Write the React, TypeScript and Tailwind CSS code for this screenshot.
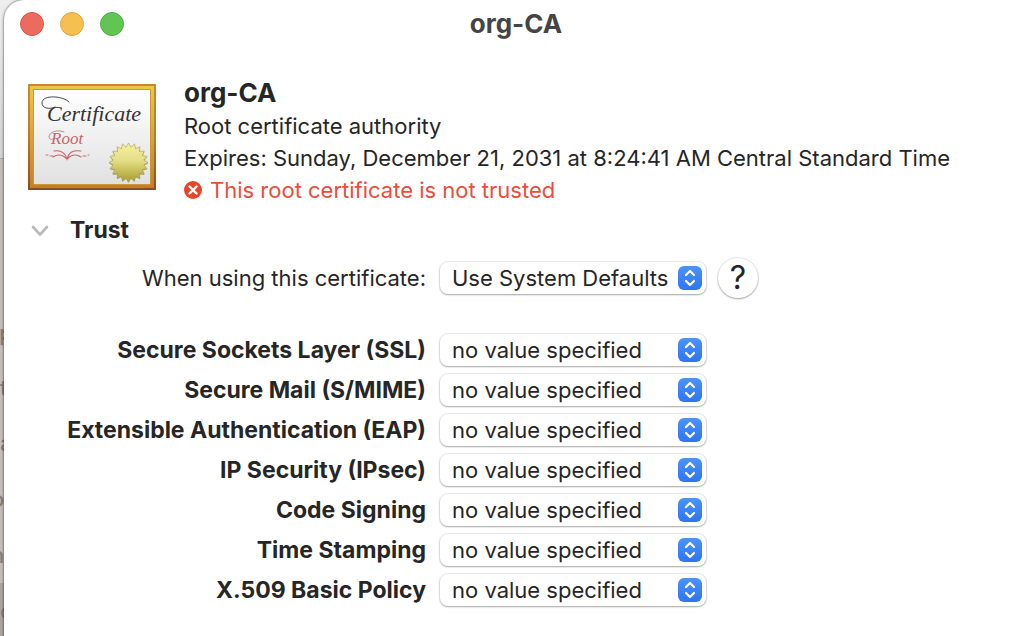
import React from "react";

const policies = [
  { id: "ssl", label: "Secure Sockets Layer (SSL)" },
  { id: "smime", label: "Secure Mail (S/MIME)" },
  { id: "eap", label: "Extensible Authentication (EAP)" },
  { id: "ipsec", label: "IP Security (IPsec)" },
  { id: "codesign", label: "Code Signing" },
  { id: "timestamp", label: "Time Stamping" },
  { id: "x509", label: "X.509 Basic Policy" },
];

const trustOptions = ["Always Trust", "Never Trust"];

function Certificate() {
  const star = Array.from({ length: 40 }, (_, i) => {
    const r = i % 2 ? 15.5 : 19.5;
    const a = (i * Math.PI) / 20 - Math.PI / 2;
    return `${(100.5 + r * Math.cos(a)).toFixed(2)},${(78.5 + r * Math.sin(a)).toFixed(2)}`;
  }).join(" ");
  return (
    <svg className="h-[106px] w-32 shrink-0" viewBox="0 0 128 106" aria-hidden="true">
      <defs>
        <linearGradient id="edge" x1="0" y1="0" x2="0" y2="1">
          <stop offset="0" stopColor="#c88a2c" />
          <stop offset="0.5" stopColor="#bb792c" />
          <stop offset="1" stopColor="#8f4c1c" />
        </linearGradient>
        <linearGradient id="gold" x1="0" y1="0" x2="0" y2="1">
          <stop offset="0" stopColor="#ebc844" />
          <stop offset="0.5" stopColor="#daa339" />
          <stop offset="1" stopColor="#c27e2c" />
        </linearGradient>
        <linearGradient id="paper" x1="0" y1="0" x2="0" y2="1">
          <stop offset="0" stopColor="#ffffff" />
          <stop offset="1" stopColor="#e1e1e2" />
        </linearGradient>
        <linearGradient id="seal" x1="0" y1="0" x2="0" y2="1">
          <stop offset="0" stopColor="#f3f0a0" />
          <stop offset="0.45" stopColor="#e4de86" />
          <stop offset="1" stopColor="#a89d2c" />
        </linearGradient>
      </defs>
      <rect width="128" height="106" fill="url(#edge)" />
      <rect x="2" y="2" width="124" height="102" fill="url(#gold)" />
      <rect x="5" y="5" width="118" height="96" fill="#c9982f" />
      <rect x="6" y="6" width="116" height="94" fill="url(#paper)" />
      <path d="M41 18C36 12 14 10 14 19c0 5 7 7 13 4" fill="none" stroke="#333" strokeWidth="0.9" strokeLinecap="round" />
      <text x="19" y="37" fontFamily="Liberation Serif, serif" fontStyle="italic" fontSize="22" fill="#333">
        Certificate
      </text>
      <path d="M36 48C30 45 21 48 21 53c0 3 4 3 6 1" fill="none" stroke="#c4656a" strokeWidth="0.8" strokeLinecap="round" />
      <text x="23" y="60" fontFamily="Liberation Serif, serif" fontStyle="italic" fontSize="17" fill="#c4656a">
        Root
      </text>
      <g fill="none" stroke="#c4656a" strokeLinecap="round">
        <path d="M26 67c7-1 11 1 13 8 2-7 6-9 14-8M25 73c6-4 11-1 14 2 3-3 8-6 14-2" strokeWidth="1.1" />
        <path d="M18 71h2M22 72h3M55 72h3M60 71h1" strokeWidth="0.9" />
      </g>
      <polygon points={star} transform="translate(0 1)" fill="#555" opacity="0.45" />
      <polygon points={star} fill="url(#seal)" stroke="#a79c3c" strokeWidth="0.6" />
    </svg>
  );
}

function Popup({ id, value, options }: { id: string; value: string; options: string[] }) {
  return (
    <div className="grid w-[266px] items-center">
      <select
        id={id}
        defaultValue={value}
        className="col-start-1 row-start-1 h-8 w-full appearance-none rounded-lg bg-white pr-9 pl-3 text-[22px] leading-8 shadow-[0_0_1px_1px_rgba(0,0,0,0.08),0_1px_2px_rgba(0,0,0,0.3)]"
      >
        {[value, ...options].map((o) => (
          <option key={o}>{o}</option>
        ))}
      </select>
      <span className="pointer-events-none col-start-1 row-start-1 mr-1 grid size-6 place-items-center justify-self-end rounded-md bg-linear-to-b from-[#4a94f8] to-[#2f73f3]">
        <svg className="size-6" viewBox="0 0 24 24" fill="none" stroke="#fff" strokeWidth="2.2" strokeLinecap="round" strokeLinejoin="round">
          <path d="M8 9l4-4 4 4M8 15l4 4 4-4" />
        </svg>
      </span>
    </div>
  );
}

export default function App() {
  return (
    <div className="relative min-h-screen overflow-hidden bg-linear-to-b from-[#eeeeee] to-[#d2d2d2] to-[158px] pl-1 font-['Inter',sans-serif] text-[#262626]">
      <div
        className="absolute top-[158px] bottom-0 left-0 w-5 border-t border-[#a9a6a3] bg-[#c3beba] text-[22px] leading-6 font-medium text-[#85817e]"
        aria-hidden="true"
      >
        <span className="absolute top-[424px] bottom-0 left-0 w-5 bg-[#aaa5a1]" />
        <span className="absolute top-[162px] -left-px">p</span>
        <span className="absolute top-[217px] left-0">t</span>
        <span className="absolute top-[272px] left-0">a</span>
        <span className="absolute top-[328px] -left-[9px]">o</span>
        <span className="absolute top-[384px] -left-[9px]">n</span>
        <span className="absolute top-[440px] left-0">c</span>
      </div>
      <main className="relative min-h-screen rounded-tl-[20px] bg-white shadow-[0_0_2px_1px_rgba(0,0,0,0.35)]">
        <header className="grid h-12 grid-cols-[1fr_auto_1fr] items-center px-4">
          <div className="flex gap-4">
            <button aria-label="Close" className="size-6 rounded-full border border-[#d9564c] bg-[#ec6b5f]" />
            <button aria-label="Minimize" className="size-6 rounded-full border border-[#dea63f] bg-[#f5c04f]" />
            <button aria-label="Zoom" className="size-6 rounded-full border border-[#4fae42] bg-[#61c554]" />
          </div>
          <h1 className="pl-2 text-[26px] leading-8 font-bold text-[#454545]">org-CA</h1>
        </header>

        <section className="flex gap-7 px-6 pt-7">
          <div className="pt-2">
            <Certificate />
          </div>
          <div className="text-[22px] leading-8 whitespace-nowrap">
            <h2 className="text-[26px] leading-[34px] font-bold">org-CA</h2>
            <p>Root certificate authority</p>
            <p>Expires: Sunday, December 21, 2031 at 8:24:41 AM Central Standard Time</p>
            <p className="flex items-center gap-2 text-[#eb4d3d]">
              <svg className="size-[18px]" viewBox="0 0 18 18" aria-hidden="true">
                <circle cx="9" cy="9" r="9" fill="#e8442a" />
                <path d="M5.5 5.5l7 7M12.5 5.5l-7 7" stroke="#fff" strokeWidth="2.4" strokeLinecap="round" />
              </svg>
              This root certificate is not trusted
            </p>
          </div>
        </section>

        <section className="pt-2">
          <button aria-expanded="true" className="ml-6 flex h-8 items-center gap-[18px] text-[23px] leading-8 font-bold">
            <svg className="size-6" viewBox="0 0 24 24" fill="none" stroke="#b9b9b9" strokeWidth="2.6" strokeLinecap="round" strokeLinejoin="round" aria-hidden="true">
              <path d="M5 9l7 7.5L19 9" />
            </svg>
            Trust
          </button>
          <div className="mt-3 grid grid-cols-[422px_auto] items-center gap-x-[14px] gap-y-2 text-[22px] leading-8">
            <label htmlFor="usage" className="text-right">When using this certificate:</label>
            <div className="flex items-center gap-3">
              <Popup id="usage" value="Use System Defaults" options={trustOptions} />
              <button
                aria-label="Help"
                className="grid size-10 place-items-center rounded-full bg-white text-[32px] leading-8 shadow-[0_0_1px_1px_rgba(0,0,0,0.08),0_1px_2px_rgba(0,0,0,0.3)]"
              >
                ?
              </button>
            </div>
            <div className="col-span-2 h-5" />
            {policies.map((p) => (
              <React.Fragment key={p.id}>
                <label htmlFor={p.id} className="text-right text-[23px] leading-8 font-bold">{p.label}</label>
                <Popup id={p.id} value="no value specified" options={trustOptions} />
              </React.Fragment>
            ))}
          </div>
        </section>
      </main>
    </div>
  );
}
